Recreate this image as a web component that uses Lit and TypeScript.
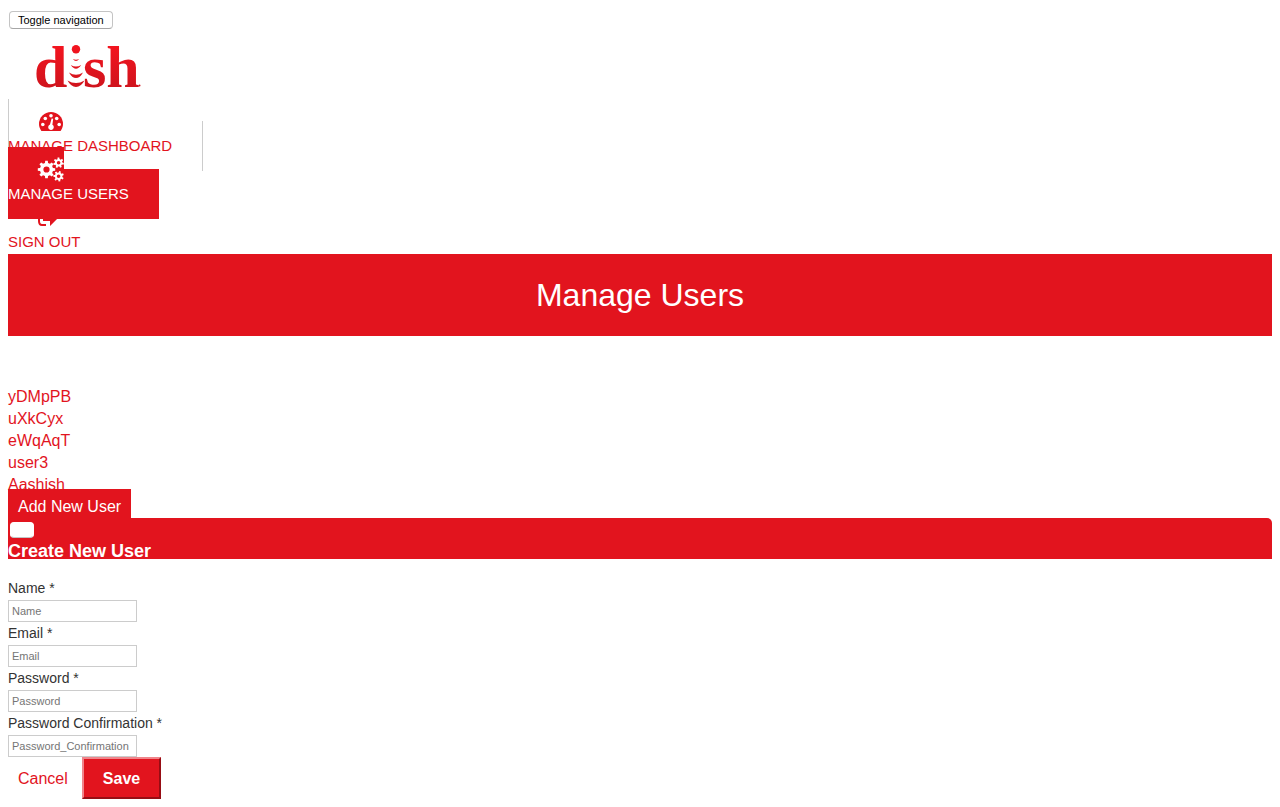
import { LitElement, html, svg, css } from "lit";
import { customElement } from "lit/decorators.js";

/** Closed outline of a toothed wheel, with a round hole in the middle. */
function gear(cx: number, cy: number, outer: number, inner: number, hole: number, teeth: number, turn = 0): string {
  const points: string[] = [];
  const step = (Math.PI * 2) / teeth;
  for (let i = 0; i < teeth; i++) {
    const a = i * step + turn;
    const corners: [number, number][] = [
      [inner, -0.3],
      [outer, -0.19],
      [outer, 0.19],
      [inner, 0.3],
    ];
    for (const [r, f] of corners) {
      points.push(`${(cx + r * Math.cos(a + f * step)).toFixed(2)} ${(cy + r * Math.sin(a + f * step)).toFixed(2)}`);
    }
  }
  return `M${points.join("L")}Z M${cx - hole} ${cy}a${hole} ${hole} 0 1 0 ${hole * 2} 0a${hole} ${hole} 0 1 0 ${-hole * 2} 0Z`;
}

const icons = {
  dashboard: svg`
    <path fill="currentColor" d="M2.400 18C0.800 15.800 0 13.400 0 11A12 12 0 0 1 24 11C24 13.400 23.200 15.800 21.600 18Z"/>
    <g fill="#fff">
      <circle cx="3.800" cy="11.500" r="1.800"/><circle cx="6.300" cy="5.500" r="1.800"/>
      <circle cx="12" cy="2.800" r="1.800"/><circle cx="17.700" cy="5.500" r="1.800"/>
      <circle cx="20.200" cy="11.500" r="1.800"/>
      <path d="M12.600 5.500L14.200 5.700L13.400 11.700A2.800 2.800 0 1 1 11 11.500Z"/>
    </g>`,
  users: svg`
    <path fill="currentColor" fill-rule="evenodd" d=${gear(8.5, 8.5, 8.8, 6.6, 3.1, 8)}/>
    <path fill="currentColor" fill-rule="evenodd" d=${gear(20.6, 1.8, 5.3, 3.8, 1.8, 7, 0.2)}/>
    <path fill="currentColor" fill-rule="evenodd" d=${gear(20.6, 15.2, 5.3, 3.8, 1.8, 7, 0.5)}/>`,
  signOut: svg`
    <path fill="none" stroke="currentColor" stroke-width="2" d="M9 -1H4Q1 -1 1 2V12Q1 16 4 16H8"/>
    <path fill="currentColor" d="M5 4H12V-2L22 7L12 17V12H5Z"/>`,
};

const navItems = [
  { label: "MANAGE DASHBOARD", icon: icons.dashboard, kind: "ruled" },
  { label: "MANAGE USERS", icon: icons.users, kind: "active" },
  { label: "SIGN OUT", icon: icons.signOut, kind: "" },
];

const users = ["yDMpPB", "uXkCyx", "eWqAqT", "user3", "Aashish"];

const fields = [
  { id: "name", label: "Name *", hint: "Name", type: "text" },
  { id: "email", label: "Email *", hint: "Email", type: "email" },
  { id: "password", label: "Password *", hint: "Password", type: "password" },
  { id: "confirmation", label: "Password Confirmation *", hint: "Password_Confirmation", type: "password" },
];

@customElement("app-root")
export class AppRoot extends LitElement {
  static styles = css`
    :host {
      --red: #e2141e;
      display: block;
      padding: 8px;
      background: #fff;
      color: #333;
      font: 16px/22px "Liberation Sans", Arial, sans-serif;
    }
    * { box-sizing: border-box; }
    a { color: var(--red); text-decoration: none; }
    ul { list-style: none; margin: 0; padding: 0; }
    .small-button {
      display: block;
      height: 18px;
      padding: 0 8px;
      border: 1px solid #c4c4c4;
      border-bottom-color: #a6a6a6;
      border-radius: 4px;
      background: #fff;
      color: #000;
      font: 11px/14px "Liberation Sans", Arial, sans-serif;
    }
    .toggle { margin: 3px 1px 15px; }
    .brand { display: block; width: 106px; margin-left: 28px; }
    .brand svg { display: block; overflow: visible; }
    .nav { padding: 25px 0 1px; font-size: 15px; }
    .nav ul { display: flex; flex-direction: column; gap: 4px; }
    .nav a { padding: 16px 30px 17px; }
    .nav svg { vertical-align: top; overflow: visible; }
    .ruled { border: solid #ccc; border-width: 0 1px; }
    .nav .active { position: relative; background: var(--red); color: #fff; }
    .active svg { position: relative; }
    .title {
      margin: 0 0 50px;
      padding: 20px;
      background: var(--red);
      color: #fff;
      font-size: 32px;
      font-weight: 400;
      line-height: 42px;
      text-align: center;
    }
    .add { padding: 9px 10px; background: var(--red); color: #fff; }
    .dialog-head {
      position: relative;
      height: 41px;
      padding-top: 4px;
      border-radius: 5px 5px 0 0;
      background: var(--red);
      color: #fff;
    }
    .close { width: 24px; height: 16px; margin-left: 2px; border-color: #fff #fff #c4c4c4; }
    .dialog-head h2 { margin: 2px 0 0; font-size: 18px; line-height: 22px; }
    form { margin-top: 18px; }
    label { display: block; font-size: 14px; line-height: 23px; }
    input {
      display: block;
      width: 129px;
      height: 22px;
      padding: 0 3px;
      border: 1px solid #ccc;
      border-radius: 0;
      background: #fff;
      font: 11px/20px "Liberation Sans", Arial, sans-serif;
    }
    input::placeholder { color: #757575; }
    .actions { display: flex; align-items: center; gap: 4px; }
    .cancel { padding: 11px 10px 9px; }
    .save {
      height: 42px;
      padding: 2px 19px 0;
      border: 2px solid;
      border-color: #f0858b #970d14 #970d14 #f0858b;
      background: var(--red);
      color: #fff;
      font: bold 16px/22px "Liberation Sans", Arial, sans-serif;
    }
  `;

  render() {
    return html`
      <header>
        <button class="small-button toggle" type="button">Toggle navigation</button>
        <a class="brand" href="#" aria-label="dish">
          <svg width="106" height="44" viewBox="0 0 106 44">
            <defs>
              <linearGradient id="shade" gradientUnits="userSpaceOnUse" x1="0" y1="0" x2="0" y2="44">
                <stop offset="0" stop-color="#f5141f" /><stop offset="1" stop-color="#cf141d" />
              </linearGradient>
            </defs>
            <g fill="url(#shade)" font-family="Liberation Serif, serif" font-weight="700" font-size="60">
              <text x="-2" y="43">d</text>
              <text x="47" y="43">sh</text>
              <circle cx="40" cy="5.200" r="4.200" />
              <path d="M36.800 15Q40 16.600 43.200 15Q40 19 36.800 15Z
                M34.800 21Q40 24 45.200 21Q40 28.500 34.800 21Z
                M33 28.500Q40 33 47 28.500Q44 34 40 34Q36 34 33 28.500Z
                M31.500 36.500Q40 41.500 48.500 36.500Q45 43 40 43Q35 43 31.500 36.500Z" />
              <circle cx="103.500" cy="41.500" r="1" />
            </g>
          </svg>
        </a>
        <nav class="nav">
          <ul>
            ${navItems.map(
              (item) => html`<li><a class=${item.kind} href="#"><svg width="26" height="22" viewBox="0 0 26 22" aria-hidden="true">${item.icon}</svg><br />${item.label}</a></li>`
            )}
          </ul>
        </nav>
      </header>
      <main>
        <h1 class="title">Manage Users</h1>
        <ul>
          ${users.map((user) => html`<li><a href="#">${user}</a></li>`)}
        </ul>
        <div><a class="add" href="#">Add New User</a></div>
        <section>
          <div class="dialog-head">
            <button class="small-button close" type="button" aria-label="Close"></button>
            <h2>Create New User</h2>
          </div>
          <form>
            ${fields.map(
              (field) => html`
                <label for=${field.id}>${field.label}</label>
                <input id=${field.id} type=${field.type} placeholder=${field.hint} />
              `
            )}
            <div class="actions">
              <a class="cancel" href="#">Cancel</a>
              <button class="save" type="button">Save</button>
            </div>
          </form>
        </section>
      </main>
    `;
  }
}
